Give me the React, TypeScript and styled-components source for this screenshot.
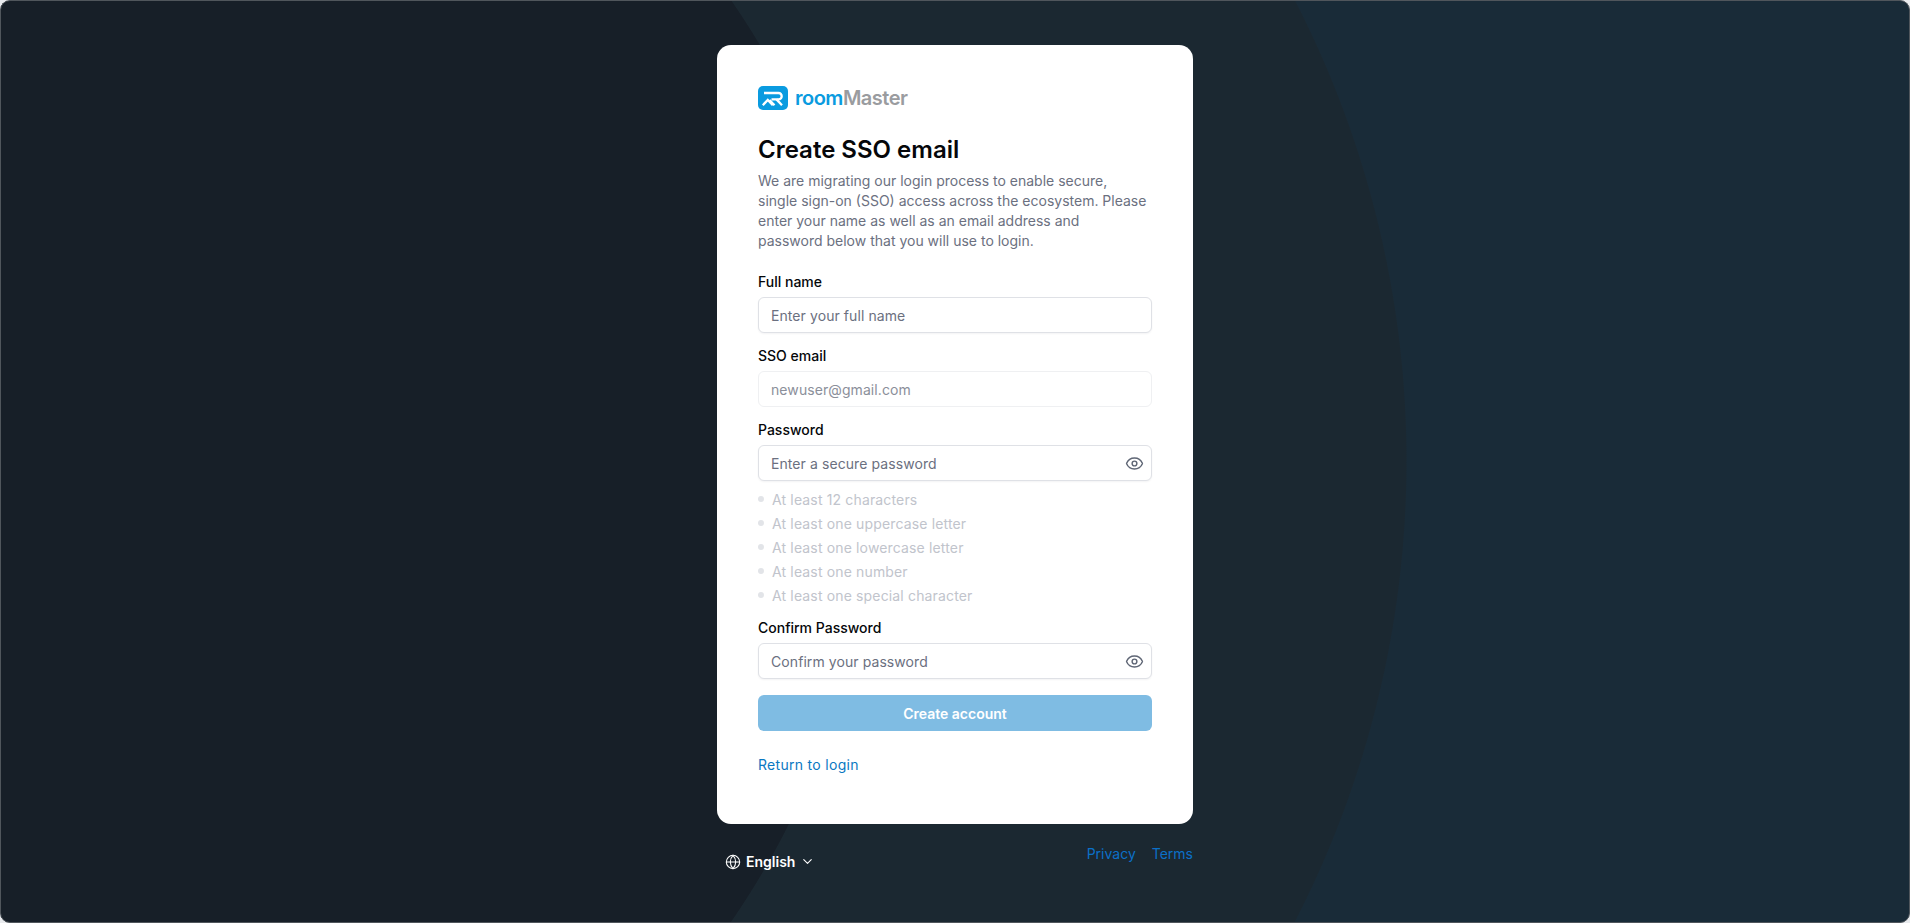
import React from 'react';
import styled, { createGlobalStyle } from 'styled-components';
import { ChevronDown, Eye, Globe } from 'lucide-react';

const rules = [
  'At least 12 characters',
  'At least one uppercase letter',
  'At least one lowercase letter',
  'At least one number',
  'At least one special character',
];

const App: React.FC = () => {
  return (
    <>
      <GlobalStyle />
      <Frame>
        <Card>
          <Logo>
            <LogoMark viewBox="0 0 30 24" aria-hidden="true">
              <rect width="30" height="24" rx="5" fill="#0a9be0" />
              <g fill="none" stroke="#fff" strokeWidth="2.3">
                <path d="M6 7h14.5a3.2 3.2 0 0 1 0 6.4H13.5" />
                <path d="M18.5 13.4l5.5 5.8" />
                <path d="M4.8 19.2l5-5.2 5 5.2" />
                <path d="M11.5 14l5 5.2" />
              </g>
            </LogoMark>
            <LogoText>
              <LogoRoom>room</LogoRoom>Master
            </LogoText>
          </Logo>
          <Title>Create SSO email</Title>
          <Intro>
            We are migrating our login process to enable secure,
            <br />
            single sign-on (SSO) access across the ecosystem. Please
            <br />
            enter your name as well as an email address and
            <br />
            password below that you will use to login.
          </Intro>

          <Field>
            <Label>Full name</Label>
            <Input type="text" placeholder="Enter your full name" />
          </Field>
          <Field>
            <Label>SSO email</Label>
            <Input type="text" value="newuser@gmail.com" disabled readOnly />
          </Field>
          <Field>
            <Label>Password</Label>
            <InputWrap>
              <Input type="password" placeholder="Enter a secure password" />
              <EyeButton type="button" aria-label="Show password">
                <Eye size={19} strokeWidth={1.8} />
              </EyeButton>
            </InputWrap>
            <RuleList>
              {rules.map((rule) => (
                <RuleItem key={rule}>{rule}</RuleItem>
              ))}
            </RuleList>
          </Field>
          <Field>
            <Label>Confirm Password</Label>
            <InputWrap>
              <Input type="password" placeholder="Confirm your password" />
              <EyeButton type="button" aria-label="Show password">
                <Eye size={19} strokeWidth={1.8} />
              </EyeButton>
            </InputWrap>
          </Field>

          <SubmitButton type="button">Create account</SubmitButton>
          <ReturnLink href="#">Return to login</ReturnLink>
        </Card>

        <Footer>
          <LanguageButton type="button">
            <Globe size={16} strokeWidth={1.6} />
            <span>English</span>
            <ChevronDown size={15} strokeWidth={1.8} />
          </LanguageButton>
          <FooterLinks>
            <FooterLink href="#">Privacy</FooterLink>
            <FooterLink href="#">Terms</FooterLink>
          </FooterLinks>
        </Footer>
      </Frame>
    </>
  );
};

const GlobalStyle = createGlobalStyle`
  html, body {
    margin: 0;
    padding: 0;
    height: 100%;
    background: #e9ebee;
  }
  * {
    box-sizing: border-box;
  }
  body {
    font-family: Inter, "Noto Sans", sans-serif;
  }
`;

const Frame = styled.div`
  height: 923px;
  border-radius: 10px;
  border: 1px solid #50565c;
  overflow: hidden;
  display: flex;
  flex-direction: column;
  align-items: center;
  padding-top: 44px;
  background-color: #192b38;
  background-origin: border-box;
  background-image:
    radial-gradient(circle 812px at 63px 461px, #171f28 99.9%, transparent 100%),
    radial-gradient(circle 1007px at 400px 461px, #1b2831 99.9%, transparent 100%);
`;

const Card = styled.div`
  width: 476px;
  height: 779px;
  padding: 41px 41px 0;
  background: #fff;
  border-radius: 14px;
  display: flex;
  flex-direction: column;
`;

const Logo = styled.div`
  display: flex;
  align-items: center;
  gap: 7px;
  height: 24px;
`;

const LogoMark = styled.svg`
  width: 30px;
  height: 24px;
  flex: none;
`;

const LogoText = styled.span`
  font-size: 20px;
  font-weight: 600;
  letter-spacing: -0.5px;
  color: #9a9c9f;
`;

const LogoRoom = styled.span`
  color: #0a9be0;
`;

const Title = styled.h1`
  margin: 24px 0 0;
  font-size: 24px;
  line-height: 32px;
  font-weight: 600;
  color: #05070a;
`;

const Intro = styled.p`
  margin: 5px 0 21px;
  font-size: 14px;
  line-height: 20px;
  color: #6b7080;
`;

const Field = styled.div`
  display: flex;
  flex-direction: column;
  margin-bottom: 13px;
`;

const Label = styled.label`
  font-size: 14px;
  line-height: 20px;
  font-weight: 500;
  color: #05070a;
  margin-bottom: 5px;
`;

const InputWrap = styled.div`
  position: relative;
  display: flex;
`;

const Input = styled.input`
  width: 100%;
  height: 36px;
  padding: 0 12px;
  font-family: inherit;
  font-size: 14px;
  letter-spacing: 0.08px;
  color: #8b8f9a;
  background: #fff;
  border: 1px solid #dfe1e6;
  border-radius: 6px;
  box-shadow: 0 1px 2px rgba(16, 24, 40, 0.05);
  outline: none;
  &::placeholder {
    color: #6b7080;
    opacity: 1;
  }
  &:disabled {
    border-color: #eff0f2;
    box-shadow: none;
  }
`;

const EyeButton = styled.button`
  position: absolute;
  top: 8.5px;
  right: 8px;
  padding: 0;
  width: 19px;
  height: 19px;
  display: flex;
  border: none;
  background: none;
  color: #5f6675;
`;

const RuleList = styled.ul`
  list-style: none;
  margin: 6px 0 -2px;
  padding: 0;
`;

const RuleItem = styled.li`
  display: flex;
  align-items: center;
  gap: 8px;
  height: 24px;
  font-size: 14px;
  letter-spacing: 0.15px;
  color: #c1c4cc;
  &::before {
    content: '';
    width: 6px;
    height: 6px;
    border-radius: 50%;
    background: #e2e4e8;
  }
`;

const SubmitButton = styled.button`
  height: 36px;
  margin-top: 3px;
  border: none;
  border-radius: 6px;
  background: #7fbce3;
  color: #fff;
  font-family: inherit;
  font-size: 14px;
  font-weight: 600;
`;

const ReturnLink = styled.a`
  margin-top: 24px;
  font-size: 14px;
  line-height: 20px;
  letter-spacing: 0.3px;
  color: #0a78c2;
  text-decoration: none;
`;

const Footer = styled.div`
  width: 476px;
  display: flex;
  justify-content: space-between;
  align-items: flex-start;
  padding: 20px 0 0 8px;
`;

const LanguageButton = styled.button`
  display: flex;
  align-items: center;
  gap: 5px;
  margin-top: 9px;
  padding: 0;
  border: none;
  background: none;
  color: #fff;
  font-family: inherit;
  font-size: 14px;
  font-weight: 600;
`;

const FooterLinks = styled.div`
  display: flex;
  gap: 16px;
`;

const FooterLink = styled.a`
  font-size: 14px;
  line-height: 20px;
  color: #0b70c8;
  text-decoration: none;
`;

export default App;
